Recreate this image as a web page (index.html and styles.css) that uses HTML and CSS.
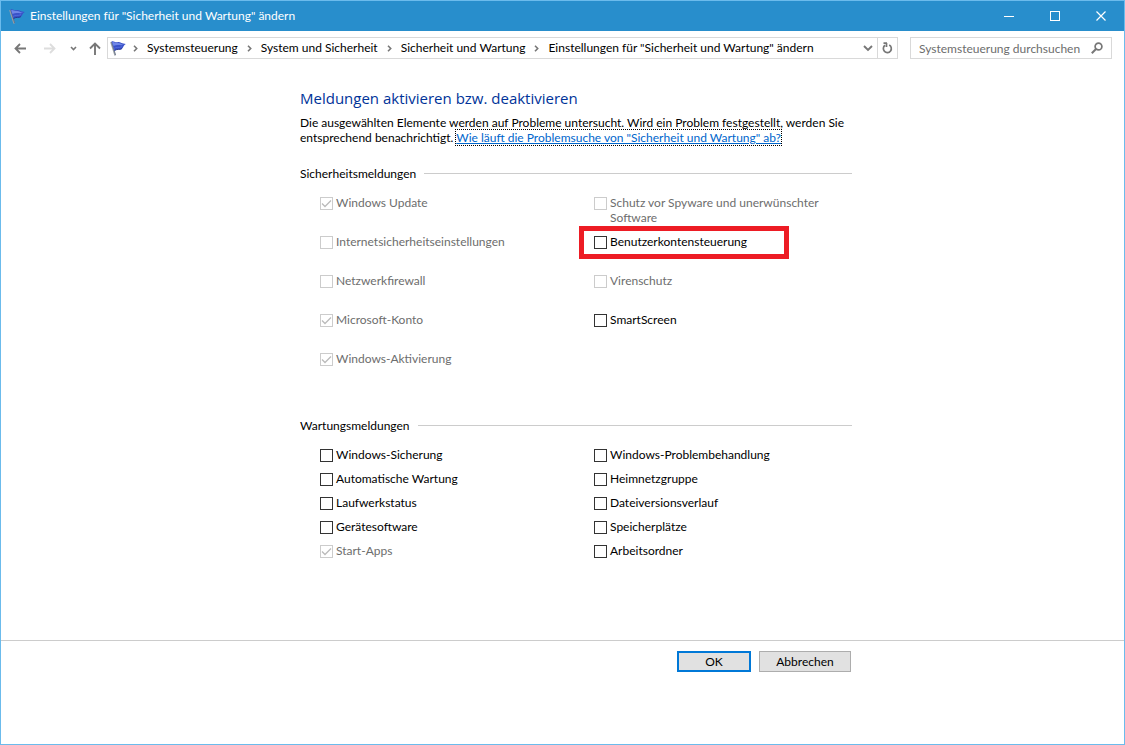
FILE: index.html
```html
<!DOCTYPE html>
<html lang="de">
<head>
  <meta charset="UTF-8">
  <meta name="viewport" content="width=device-width, initial-scale=1.0">
  <title>Einstellungen für "Sicherheit und Wartung" ändern</title>
  <link rel="stylesheet" href="styles.css">
</head>
<body>
  <!-- Shared icons -->
  <svg class="defs" width="0" height="0" aria-hidden="true">
    <symbol id="flag" viewBox="0 0 16 16">
      <path d="M1 2 L5.200 15.500" stroke="#9aa0a8" stroke-width="1.600" fill="none" />
      <path d="M1.600 2 L5.600 15" stroke="#4d5a73" stroke-width="0.600" fill="none" />
      <path d="M1.500 1.500 C3.500 0.500 5 2.800 7.500 2.200 C10 1.500 11.500 3.800 15.800 4 C13.500 5 13.500 7.500 11.800 9 C9.500 10.500 8 8.500 4.500 10.800 Z" fill="#3a52c8" />
      <path d="M2.200 2.300 C4 1.500 5 3.600 7.600 3 C10 2.400 11 4.500 14 4.600 C11.500 6.500 8 3.800 3.500 6 Z" fill="#6f86e8" />
      <path d="M4 8.500 C6.500 6.300 9 8.500 12 6.500" stroke="#5068dc" stroke-width="1" fill="none" />
      <path d="M4.500 10.500 C7.500 8.600 9.500 10 11.800 8.700" stroke="#22338f" stroke-width="0.900" fill="none" />
    </symbol>
    <symbol id="chevron" viewBox="0 0 5 7">
      <path d="M1 0.800 L3.700 3.500 L1 6.200" stroke="#777" stroke-width="1.600" fill="none" />
    </symbol>
  </svg>

  <div class="window">
    <header class="titlebar">
      <svg class="flag"><use href="#flag" /></svg>
      <span class="title">Einstellungen für "Sicherheit und Wartung" ändern</span>
      <button type="button" class="win-button" aria-label="Minimieren">
        <svg width="10" height="10"><path d="M0 5.500 H10" stroke="#fff" /></svg>
      </button>
      <button type="button" class="win-button" aria-label="Maximieren">
        <svg width="10" height="10"><rect x="0.500" y="0.500" width="9" height="9" fill="none" stroke="#fff" /></svg>
      </button>
      <button type="button" class="win-button" aria-label="Schließen">
        <svg width="10" height="10"><path d="M0.500 0.500 L9.500 9.500 M9.500 0.500 L0.500 9.500" stroke="#fff" stroke-width="1.200" /></svg>
      </button>
    </header>

    <nav class="navbar">
      <div class="history">
        <button type="button" aria-label="Zurück">
          <svg width="12" height="11"><path d="M12 5.500 H1.500 M6 1 L1.500 5.500 L6 10" stroke="#777" stroke-width="1.800" fill="none" /></svg>
        </button>
        <button type="button" aria-label="Vorwärts">
          <svg width="12" height="11"><path d="M0 5.500 H10.500 M6 1 L10.500 5.500 L6 10" stroke="#ddd" stroke-width="1.800" fill="none" /></svg>
        </button>
        <button type="button" class="recent" aria-label="Zuletzt besucht">
          <svg width="7" height="5"><path d="M1 1 L3.500 3.500 L6 1" stroke="#777" stroke-width="1.600" fill="none" /></svg>
        </button>
        <button type="button" class="up" aria-label="Nach oben">
          <svg width="12" height="13"><path d="M6 13 V1.500 M1 6.500 L6 1.500 L11 6.500" stroke="#777" stroke-width="1.900" fill="none" /></svg>
        </button>
      </div>
      <div class="address">
        <svg class="flag"><use href="#flag" /></svg>
        <svg class="chevron"><use href="#chevron" /></svg>
        <a href="#">Systemsteuerung</a>
        <svg class="chevron"><use href="#chevron" /></svg>
        <a href="#">System und Sicherheit</a>
        <svg class="chevron"><use href="#chevron" /></svg>
        <a href="#">Sicherheit und Wartung</a>
        <svg class="chevron"><use href="#chevron" /></svg>
        <a href="#">Einstellungen für "Sicherheit und Wartung" ändern</a>
        <button type="button" class="drop" aria-label="Vorherige Orte">
          <svg width="10" height="7"><path d="M1 1 L5 5 L9 1" stroke="#777" stroke-width="1.900" fill="none" /></svg>
        </button>
        <button type="button" class="refresh" aria-label="Aktualisieren">
          <svg width="11" height="12"><path d="M7.200 3 A4 4 0 1 1 3 3.300 M1.500 1.200 H5 M4.500 1 V5" stroke="#777" stroke-width="1.700" fill="none" /></svg>
        </button>
      </div>
      <div class="search">
        <input type="text" placeholder="Systemsteuerung durchsuchen" aria-label="Systemsteuerung durchsuchen">
        <svg width="12" height="12"><circle cx="7.500" cy="4.500" r="3.400" stroke="#777" stroke-width="1.700" fill="none" /><path d="M5 7 L0.800 11.200" stroke="#777" stroke-width="2" /></svg>
      </div>
    </nav>

    <form class="page">
      <main class="content">
        <h1>Meldungen aktivieren bzw. deaktivieren</h1>
        <p class="intro">
          Die ausgewählten Elemente werden auf Probleme untersucht. Wird ein Problem festgestellt, werden Sie<br>
          entsprechend benachrichtigt. <a href="#">Wie läuft die Problemsuche von "Sicherheit und Wartung" ab?</a>
        </p>

        <section>
          <h2>Sicherheitsmeldungen</h2>
          <div class="options security">
            <label><input type="checkbox" checked disabled><span>Windows Update</span></label>
            <label><input type="checkbox" disabled><span>Schutz vor Spyware und unerwünschter<br>Software</span></label>
            <label><input type="checkbox" disabled><span>Internetsicherheitseinstellungen</span></label>
            <label class="highlight"><input type="checkbox"><span>Benutzerkontensteuerung</span></label>
            <label><input type="checkbox" disabled><span>Netzwerkfirewall</span></label>
            <label><input type="checkbox" disabled><span>Virenschutz</span></label>
            <label><input type="checkbox" checked disabled><span>Microsoft-Konto</span></label>
            <label><input type="checkbox"><span>SmartScreen</span></label>
            <label><input type="checkbox" checked disabled><span>Windows-Aktivierung</span></label>
          </div>
        </section>

        <section>
          <h2>Wartungsmeldungen</h2>
          <div class="options">
            <label><input type="checkbox"><span>Windows-Sicherung</span></label>
            <label><input type="checkbox"><span>Windows-Problembehandlung</span></label>
            <label><input type="checkbox"><span>Automatische Wartung</span></label>
            <label><input type="checkbox"><span>Heimnetzgruppe</span></label>
            <label><input type="checkbox"><span>Laufwerkstatus</span></label>
            <label><input type="checkbox"><span>Dateiversionsverlauf</span></label>
            <label><input type="checkbox"><span>Gerätesoftware</span></label>
            <label><input type="checkbox"><span>Speicherplätze</span></label>
            <label><input type="checkbox" checked disabled><span>Start-Apps</span></label>
            <label><input type="checkbox"><span>Arbeitsordner</span></label>
          </div>
        </section>
      </main>

      <footer class="footer">
        <div class="actions">
          <button type="submit" class="ok">OK</button>
          <button type="button" class="cancel">Abbrechen</button>
        </div>
      </footer>
    </form>
  </div>
</body>
</html>
```
FILE: styles.css
```css
*, *::after {
  box-sizing: border-box;
}

body {
  margin: 0;
  font-family: Lato, "Open Sans", sans-serif;
  font-size: 12px;
  line-height: 15px;
  color: #000;
  background: #fff;
}

button, input {
  font: inherit;
}

.defs {
  position: absolute;
}

.window {
  display: flex;
  flex-direction: column;
  min-height: 100vh;
  border: 1px solid #6bbbec;
}

/* Title bar */
.titlebar {
  display: flex;
  align-items: center;
  height: 30px;
  padding-left: 8px;
  background: #288ecc;
  color: #fff;
}

.flag {
  width: 16px;
  height: 16px;
  flex: none;
}

.title {
  flex: 1;
  margin-left: 5px;
}

.title, .address a {
  padding-bottom: 2px;
}

.win-button {
  display: flex;
  align-items: center;
  justify-content: center;
  width: 46px;
  height: 30px;
  padding: 0;
  border: none;
  background: none;
}

/* Navigation bar */
.navbar {
  display: flex;
  align-items: center;
  padding: 6px 12px 0 4px;
}

.history {
  display: flex;
  align-items: center;
}

.history button, .address button {
  display: flex;
  align-items: center;
  justify-content: center;
  width: 30px;
  padding: 0;
  border: none;
  background: none;
}

.history .recent {
  width: 17px;
}

.history .up {
  width: 25px;
}

.address {
  display: flex;
  align-items: center;
  flex: 1;
  height: 22px;
  padding-left: 2px;
  border: 1px solid #d9d9d9;
  white-space: nowrap;
}

.address a {
  color: #000;
  text-decoration: none;
}

.chevron {
  width: 5px;
  height: 7px;
  margin: 0 9px;
  flex: none;
}

.address .flag + .chevron {
  margin-left: 7px;
}

.address .drop {
  width: 18px;
  margin-left: auto;
}

.address .refresh {
  width: 20px;
  height: 20px;
  border-left: 1px solid #d9d9d9;
}

.search {
  display: flex;
  align-items: center;
  width: 202px;
  height: 22px;
  margin-left: 12px;
  padding: 0 8px;
  border: 1px solid #d9d9d9;
}

.search input {
  flex: 1;
  min-width: 0;
  padding: 0;
  border: none;
  outline: none;
}

.search input::placeholder {
  color: #6d6d6d;
}

/* Page content */
.page {
  display: flex;
  flex-direction: column;
  flex: 1;
}

.content, .actions {
  width: 100%;
  max-width: 579px;
  margin: 0 auto;
  padding-left: 27px;
}

.content {
  flex: 1;
  padding-top: 28px;
}

h1 {
  margin: 0 0 6px;
  font-family: "Open Sans", sans-serif;
  font-size: 15px;
  line-height: 22px;
  font-weight: normal;
  color: #003399;
}

.intro {
  margin: 0 0 21px;
}

.intro a {
  color: #0066cc;
  outline: 1px dotted #000;
}

h2 {
  display: flex;
  align-items: center;
  gap: 8px;
  margin: 0 0 14px;
  font-size: 12px;
  line-height: 15px;
  font-weight: normal;
}

h2::after {
  content: "";
  flex: 1;
  height: 1px;
  background: #ccc;
}

section {
  margin-bottom: 37px;
}

.options {
  display: grid;
  grid-template-columns: 274px 1fr;
  row-gap: 9px;
  padding-left: 20px;
}

.options.security {
  grid-auto-rows: 30px;
}

.options label {
  display: flex;
  align-items: flex-start;
  place-self: start;
  gap: 3px;
}

.options label:has(input:disabled) {
  color: #6d6d6d;
}

.options input {
  appearance: none;
  flex: none;
  width: 13px;
  height: 13px;
  margin: 2px 0 0;
  border: 1px solid #333;
  background: #fff;
}

.options input:disabled {
  border-color: #ccc;
}

.options input:checked {
  background: url('data:image/svg+xml,<svg xmlns="http://www.w3.org/2000/svg" viewBox="0 0 11 11"><path d="M1 5.500 L4 8.500 L10 2.500" fill="none" stroke="%23bbb" stroke-width="1.300"/></svg>') center no-repeat;
}

/* Red marker around a single option */
.highlight {
  position: relative;
}

.highlight::after {
  content: "";
  position: absolute;
  top: -8px;
  left: -15px;
  width: 210px;
  height: 33px;
  border: 5px solid #ed1c24;
  pointer-events: none;
}

/* Bottom buttons */
.footer {
  min-height: 104px;
  padding-top: 10px;
  border-top: 1px solid #ccc;
}

.actions {
  display: flex;
  justify-content: flex-end;
  gap: 8px;
  padding-right: 1px;
}

.actions button {
  height: 21px;
  padding: 0;
  border: 1px solid #adadad;
  background: #e1e1e1;
}

.actions .ok {
  width: 74px;
  border: 2px solid #0078d7;
}

.actions .cancel {
  width: 92px;
}
```
